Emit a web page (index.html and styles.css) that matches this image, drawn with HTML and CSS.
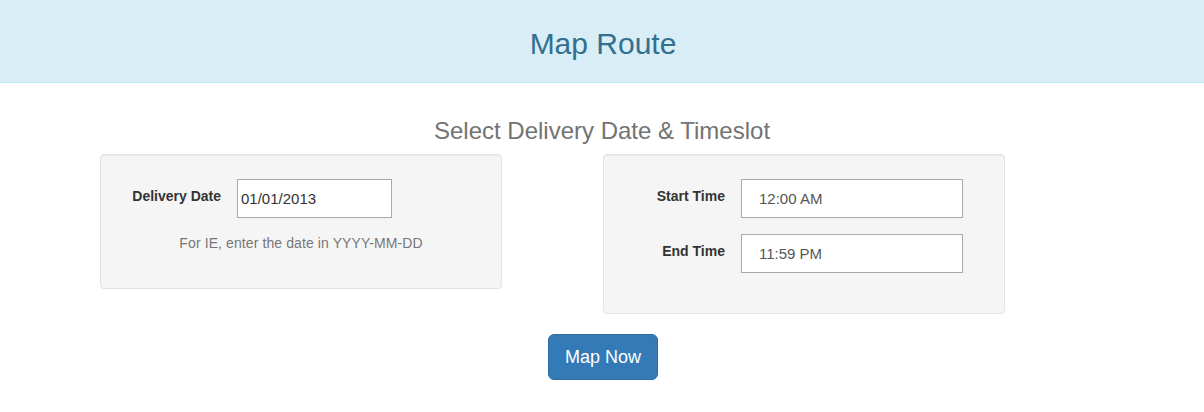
FILE: index.html
```html
<!DOCTYPE html>
<html>
<head>
<meta charset="utf-8">
<title>Map Route</title>
<link rel="stylesheet" href="styles.css">
</head>
<body>
<header class="banner">
  <h2 class="banner-title">Map Route</h2>
</header>
<main class="content">
  <h3 class="section-title">Select Delivery Date &amp; Timeslot</h3>
  <div class="panels">
    <div class="well well-date">
      <div class="field-row">
        <label class="field-label">Delivery Date</label>
        <input class="field-input date-input" type="text" value="01/01/2013">
      </div>
      <p class="hint">For IE, enter the date in YYYY-MM-DD</p>
    </div>
    <div class="well well-time">
      <div class="field-row">
        <label class="field-label">Start Time</label>
        <input class="field-input time-input" type="text" value="12:00 AM">
      </div>
      <div class="field-row row-gap">
        <label class="field-label">End Time</label>
        <input class="field-input time-input" type="text" value="11:59 PM">
      </div>
    </div>
  </div>
  <div class="actions">
    <button class="btn-primary" type="button">Map Now</button>
  </div>
</main>
</body>
</html>
```

FILE: styles.css
```css
* { box-sizing: border-box; }

html, body {
  margin: 0;
  padding: 0;
  background: #fff;
  font-family: "Liberation Sans", Arial, sans-serif;
  font-size: 14px;
  line-height: 20px;
  color: #333;
}

.banner {
  background: #d9edf7;
  border-bottom: 1px solid #bce8f1;
  padding: 27px 0 22px;
  text-align: center;
}

.banner-title {
  margin: 0;
  font-size: 30px;
  line-height: 33px;
  font-weight: normal;
  color: #31708f;
  padding-left: 2px;
}

.content {
  padding-top: 35px;
}

.section-title {
  margin: 0 0 10px;
  text-align: center;
  font-size: 24px;
  line-height: 26.4px;
  font-weight: normal;
  color: #737373;
}

.panels {
  display: flex;
  align-items: flex-start;
  padding-left: 100px;
  gap: 101px;
}

.well {
  width: 402px;
  background: #f5f5f5;
  border: 1px solid #e3e3e3;
  border-radius: 4px;
  box-shadow: inset 0 1px 1px rgba(0, 0, 0, 0.05);
  padding: 24px 19px 0;
}

.well-date { padding-bottom: 35px; }
.well-time { padding-bottom: 40px; }

.field-row {
  display: flex;
  align-items: flex-start;
  gap: 16px;
}

.row-gap { margin-top: 16px; }

.field-label {
  width: 101px;
  padding-top: 7px;
  text-align: right;
  font-weight: bold;
  color: #333;
}

.well-time .field-label { width: 102px; }

.field-input {
  height: 39px;
  margin: 0;
  border: 1px solid #a9a9a9;
  background: #fff;
  font-family: "Liberation Sans", Arial, sans-serif;
  font-size: 15px;
  outline: none;
}

.date-input {
  width: 155px;
  padding: 0 3px;
  color: #333;
}

.time-input {
  width: 222px;
  padding: 0 17px;
  color: #555;
}

.hint {
  margin: 15px 0 0;
  text-align: center;
  color: #777;
  letter-spacing: 0.1px;
}

.actions {
  display: flex;
  justify-content: center;
  margin-top: 20px;
  padding-left: 2px;
}

.btn-primary {
  padding: 10px 16px;
  font-family: "Liberation Sans", Arial, sans-serif;
  font-size: 18px;
  line-height: 24px;
  color: #fff;
  background: #337ab7;
  border: 1px solid #2e6da4;
  border-radius: 6px;
  cursor: pointer;
}
```
